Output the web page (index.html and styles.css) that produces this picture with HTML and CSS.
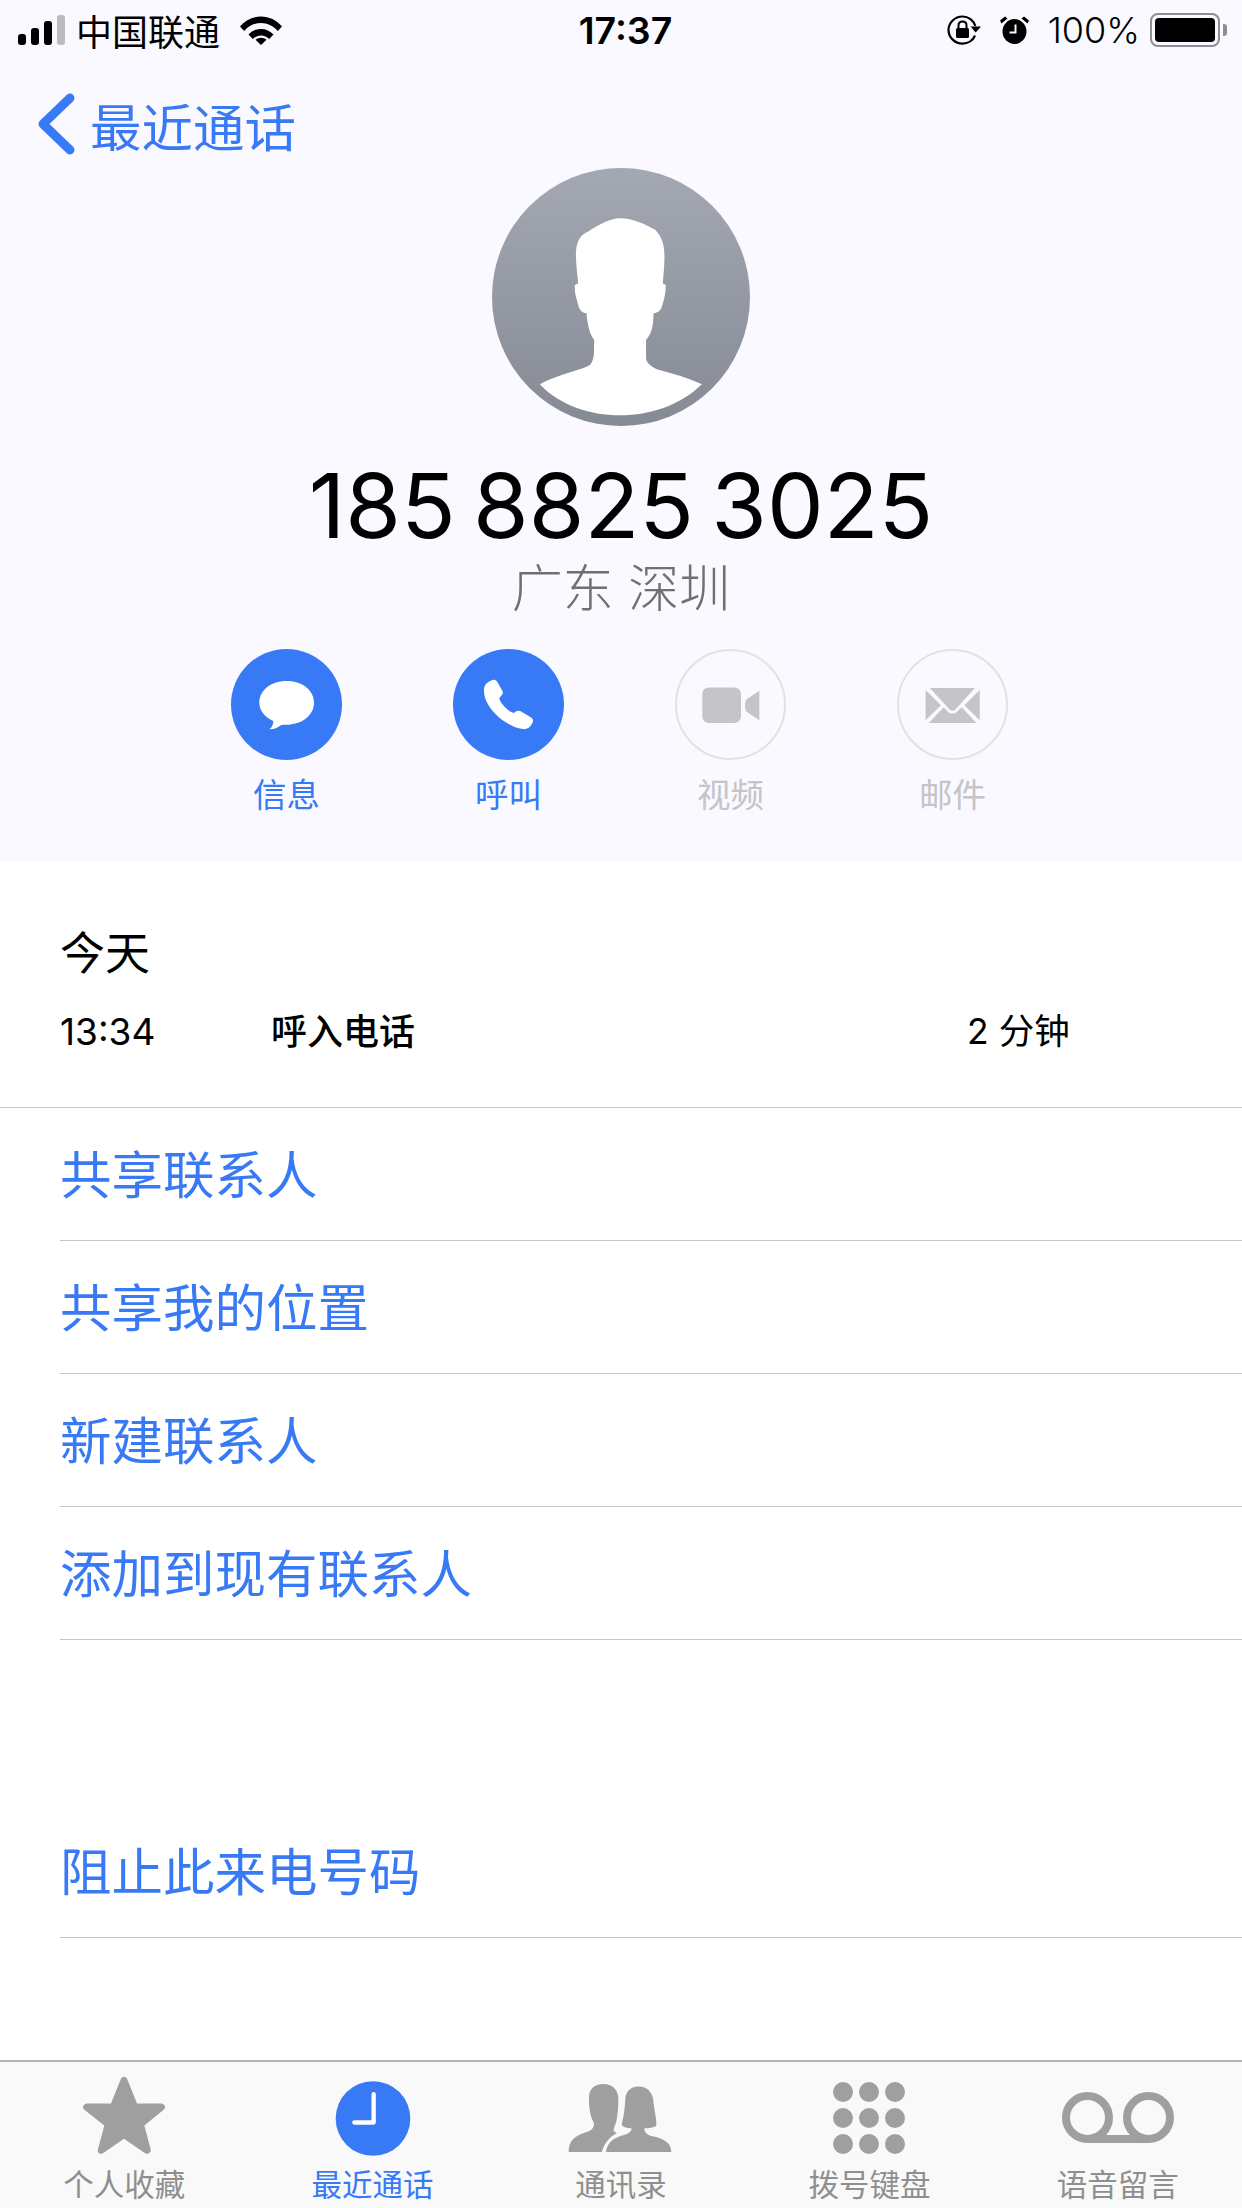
FILE: index.html
```html
<!DOCTYPE html>
<html lang="zh-CN">
<head>
    <meta charset="UTF-8">
    <meta name="viewport" content="width=device-width, initial-scale=1.0">
    <title>最近通话</title>
    <link rel="stylesheet" href="styles.css">
</head>
<body>
    <header class="top">
        <div class="status">
            <div class="status-side">
                <svg class="signal" viewBox="0 0 47 30">
                    <rect x="0" y="19" width="8" height="11" rx="3" fill="#000"/>
                    <rect x="13" y="13" width="8" height="17" rx="3" fill="#000"/>
                    <rect x="26" y="6" width="8" height="24" rx="3" fill="#000"/>
                    <rect x="39" y="0" width="8" height="30" rx="3" fill="#bcbcc0"/>
                </svg>
                <span class="carrier">中国联通</span>
                <svg class="wifi" viewBox="0 0 42 30">
                    <path d="M0 11.500C5.500 5 13 1.500 21 1.500S36.500 5 42 11.500L37.800 16C33.500 11 27.500 8 21 8S8.500 11 4.200 16Z" fill="#000"/>
                    <path d="M8.500 19.500C11.800 16 16.200 14 21 14s9.200 2 12.500 5.500L29.200 24C27 21.800 24.200 20.500 21 20.500S15 21.800 12.800 24Z" fill="#000"/>
                    <path d="M15.500 24.800C17 23.500 19 22.800 21 22.800s4 .7 5.500 2L21 30Z" fill="#000"/>
                </svg>
            </div>
            <span class="clock">17:37</span>
            <div class="status-side status-right">
                <svg class="rotate-lock" viewBox="0 0 34 30">
                    <path d="M28 20.500C26 25.500 21 28.600 15.500 28.600 8 28.600 1.500 22.500 1.500 15S8 1.500 15.500 1.500C21.500 1.500 26.500 5.500 28.300 11" fill="none" stroke="#000" stroke-width="2.200"/>
                    <path d="M23.500 11.500H34L28.700 17.500Z" fill="#000"/>
                    <rect x="9" y="13" width="13" height="10" rx="1.500" fill="#000"/>
                    <path d="M11.500 13.500V10.500C11.500 8 13.200 6.500 15.500 6.500S19.500 8 19.500 10.500V13.500" fill="none" stroke="#000" stroke-width="2"/>
                </svg>
                <svg class="alarm" viewBox="0 0 29 28">
                    <ellipse cx="14.500" cy="15.500" rx="12" ry="12.500" fill="#000"/>
                    <path d="M0 4.500 5 .5 7.500 2.500 1.500 7.500ZM29 4.500 24 .5 21.500 2.500 27.500 7.500Z" fill="#000"/>
                    <path d="M15.500 8.500V16.500H9.500" fill="none" stroke="#f9f9ff" stroke-width="2"/>
                </svg>
                <span class="percent">100%</span>
                <div class="battery"><div class="battery-fill"></div></div>
                <div class="battery-cap"></div>
            </div>
        </div>

        <div class="nav">
            <svg class="chevron" viewBox="0 0 37 62">
                <path d="M32 5 5 31 32 57" fill="none" stroke="#387af6" stroke-width="9" stroke-linecap="round" stroke-linejoin="round"/>
            </svg>
            <span class="nav-title">最近通话</span>
        </div>

        <svg class="avatar" viewBox="97 55 772 772">
            <defs>
                <linearGradient id="avatarFill" x1="0" y1="0" x2="0" y2="1">
                    <stop offset="0" stop-color="#a4a8b3"/>
                    <stop offset="1" stop-color="#868a94"/>
                </linearGradient>
            </defs>
            <circle cx="483" cy="441" r="386" fill="url(#avatarFill)"/>
            <path d="M480 205C520 205 560 225 585 240C605 260 613 285 613 320C613 350 610 375 608 400L617 405C617 430 612 450 605 470C600 485 590 488 580 490C580 520 578 545 558 570L558 625C560 640 575 650 590 657C640 670 690 685 725 702C660 765 570 795 480 795C390 795 300 765 240 702C280 680 340 665 380 650C395 645 400 630 402 610L403 570C388 550 382 520 380 490C370 488 360 485 355 465C350 445 343 430 345 405L355 400C352 370 348 340 348 310C350 275 360 255 385 245C415 225 450 205 480 205Z" fill="#fff"/>
        </svg>

        <div class="number">185 8825 3025</div>
        <div class="location">广东 深圳</div>

        <div class="actions">
            <div class="action">
                <div class="action-icon">
                    <svg viewBox="63 57 333 333">
                        <path d="M230 153C280 153 312 183 312 218C312 256 275 284 228 284C222 284 218 284 214 285C205 292 192 299 178 298C186 292 190 284 190 273C165 262 148 242 148 218C148 183 180 153 230 153Z" fill="#fff"/>
                    </svg>
                </div>
                <span class="action-label">信息</span>
            </div>
            <div class="action">
                <div class="action-icon">
                    <svg viewBox="729 57 333 333">
                        <path d="M846 151C852 148 858 150 862 156L877 182C880 188 878 194 873 198L868 204C868 212 880 228 890 236C898 243 905 248 912 249C918 243 925 240 932 244L962 262C970 267 971 273 966 281C960 293 950 299 938 297C905 292 872 270 850 245C830 222 818 195 823 172C825 163 835 155 846 151Z" fill="#fff"/>
                    </svg>
                </div>
                <span class="action-label">呼叫</span>
            </div>
            <div class="action action-off">
                <div class="action-icon">
                    <svg viewBox="109 59 326 326">
                        <rect x="186" y="170" width="118" height="108" rx="20" fill="#c4c4c9"/>
                        <path d="M360 180V270L322 245C314 238 314 212 322 205Z" fill="#c4c4c9"/>
                    </svg>
                </div>
                <span class="action-label">视频</span>
            </div>
            <div class="action action-off">
                <div class="action-icon">
                    <svg viewBox="774 59 326 326">
                        <path d="M868 172H1005L948 235C942 243 932 243 926 235Z" fill="#c4c4c9"/>
                        <path d="M855 178V270L902 224ZM1020 178V270L973 224Z" fill="#c4c4c9"/>
                        <path d="M865 278 910 230 922 243C932 252 942 252 952 243L965 230 1010 278Z" fill="#c4c4c9"/>
                    </svg>
                </div>
                <span class="action-label">邮件</span>
            </div>
        </div>
    </header>

    <section class="calls">
        <div class="calls-day">今天</div>
        <div class="calls-row">
            <span class="calls-time">13:34</span>
            <span class="calls-type">呼入电话</span>
            <span class="calls-length">2 分钟</span>
        </div>
    </section>

    <ul class="links">
        <li class="link">共享联系人</li>
        <li class="link">共享我的位置</li>
        <li class="link">新建联系人</li>
        <li class="link">添加到现有联系人</li>
    </ul>

    <ul class="links links-block">
        <li class="link">阻止此来电号码</li>
    </ul>

    <nav class="tabs">
        <div class="tab">
            <svg viewBox="221 100 300 245">
                <path d="M371 108C376 108 380 112 382 118L410 188H482C494 188 498 200 490 207L432 254L451 325C453 336 442 343 432 336L371 294L310 336C300 343 289 336 293 325L312 254L252 207C244 200 250 188 260 188H332L360 118C362 112 366 108 371 108Z" fill="#9f9f9f"/>
            </svg>
            <span class="tab-label">个人收藏</span>
        </div>
        <div class="tab tab-on">
            <svg viewBox="969 100 300 245">
                <circle cx="1119" cy="233" r="112" fill="#387af6"/>
                <path d="M1121 160V245H1063" fill="none" stroke="#fff" stroke-width="13" stroke-linecap="round" stroke-linejoin="round"/>
            </svg>
            <span class="tab-label">最近通话</span>
        </div>
        <div class="tab">
            <svg viewBox="150 100 211.300 245" preserveAspectRatio="none">
                <path d="M218 130C240 130 250 150 250 175C250 205 248 225 246 240C244 252 240 262 240 270L247 277C235 285 222 300 215 333L145 333C145 305 155 285 180 275C195 268 200 260 198 245C190 225 188 200 188 170C188 145 200 130 218 130Z" fill="#9f9f9f"/>
                <path d="M292 137C312 137 322 155 324 180C326 210 332 240 330 255C320 262 310 262 305 262C305 275 310 282 325 287C350 295 362 310 362 333L224 333C226 305 240 290 262 282C272 278 278 272 278 262C268 262 258 258 257 250C262 225 264 200 265 170C267 150 278 137 292 137Z" fill="#9f9f9f"/>
            </svg>
            <span class="tab-label">通讯录</span>
        </div>
        <div class="tab">
            <svg viewBox="0 0 100 82">
                <circle cx="24" cy="18" r="10" fill="#9f9f9f"/>
                <circle cx="50" cy="18" r="10" fill="#9f9f9f"/>
                <circle cx="76" cy="18" r="10" fill="#9f9f9f"/>
                <circle cx="24" cy="44" r="10" fill="#9f9f9f"/>
                <circle cx="50" cy="44" r="10" fill="#9f9f9f"/>
                <circle cx="76" cy="44" r="10" fill="#9f9f9f"/>
                <circle cx="24" cy="70" r="10" fill="#9f9f9f"/>
                <circle cx="50" cy="70" r="10" fill="#9f9f9f"/>
                <circle cx="76" cy="70" r="10" fill="#9f9f9f"/>
            </svg>
            <span class="tab-label">拨号键盘</span>
        </div>
        <div class="tab">
            <svg viewBox="0 0 100 82">
                <path d="M19.500 65H80.500" fill="none" stroke="#9f9f9f" stroke-width="8"/>
                <circle cx="19.500" cy="43.500" r="21.500" fill="none" stroke="#9f9f9f" stroke-width="8"/>
                <circle cx="80.500" cy="43.500" r="21.500" fill="none" stroke="#9f9f9f" stroke-width="8"/>
            </svg>
            <span class="tab-label">语音留言</span>
        </div>
    </nav>
</body>
</html>
```

FILE: styles.css
```css
* {
    box-sizing: border-box;
}
body {
    margin: 0;
    width: 1242px;
    height: 2208px;
    display: flex;
    flex-direction: column;
    background: white;
    color: black;
    font-family: Inter, "Noto Sans CJK SC", sans-serif;
    overflow: hidden;
}
ul {
    list-style: none;
    margin: 0;
    padding: 0;
}

.top {
    height: 861px;
    background: #f9f9ff;
    display: flex;
    flex-direction: column;
    align-items: center;
}

.status {
    width: 100%;
    height: 60px;
    padding: 0 15px 0 18px;
    display: flex;
    align-items: center;
    justify-content: space-between;
}
.status-side {
    width: 500px;
    display: flex;
    align-items: center;
}
.status-right {
    justify-content: flex-end;
}
.signal {
    width: 47px;
    height: 30px;
}
.carrier {
    margin-left: 11px;
    font-size: 36px;
}
.wifi {
    width: 42px;
    height: 30px;
    margin-left: 20px;
}
.clock {
    padding-left: 6px;
    font-size: 37.500px;
    font-weight: 600;
}
.rotate-lock {
    width: 34px;
    height: 30px;
}
.alarm {
    width: 29px;
    height: 28px;
    margin-left: 19px;
}
.percent {
    margin-left: 19px;
    font-size: 36px;
    font-weight: 300;
}
.battery {
    width: 70px;
    height: 34px;
    margin-left: 10px;
    padding: 3px;
    border: 2px solid #8f8f93;
    border-radius: 8px;
}
.battery-fill {
    height: 100%;
    background: black;
    border-radius: 4px;
}
.battery-cap {
    width: 4px;
    height: 12px;
    margin-left: 3px;
    background: #8f8f93;
    border-radius: 0 3px 3px 0;
}

.nav {
    width: 100%;
    height: 95px;
    padding: 33px 0 0 38px;
    display: flex;
    align-items: center;
    gap: 15px;
    color: #387af6;
}
.chevron {
    width: 37px;
    height: 62px;
    flex: none;
}
.nav-title {
    font-size: 51.500px;
}

.avatar {
    width: 258px;
    height: 258px;
    margin-top: 13px;
    flex: none;
}
.number {
    margin-top: 22px;
    font-size: 90px;
    line-height: 116px;
    font-weight: 380;
    word-spacing: -8px;
}
.location {
    margin-top: -7px;
    font-size: 51px;
    line-height: 64px;
    font-weight: 300;
    color: #6f6f74;
}

.actions {
    margin-top: 28px;
    margin-right: 3px;
    display: grid;
    grid-template-columns: repeat(4, 222px);
}
.action {
    display: flex;
    flex-direction: column;
    align-items: center;
    color: #387af6;
}
.action-icon {
    width: 111px;
    height: 111px;
    border-radius: 50%;
    background: #387af6;
}
.action-icon svg {
    display: block;
    width: 111px;
    height: 111px;
}
.action-label {
    margin-top: 11px;
    font-size: 33.500px;
    line-height: 48px;
}
.action-off {
    color: #c4c4c9;
}
.action-off .action-icon {
    background: none;
    border: 2px solid #e2e2e6;
}
.action-off .action-icon svg {
    width: 107px;
    height: 107px;
}

.calls {
    height: 247px;
    padding: 61px 0 0 60px;
    border-bottom: 1px solid #c6c6ca;
}
.calls-day {
    font-size: 45px;
    line-height: 64px;
}
.calls-row {
    margin-top: 21px;
    display: grid;
    grid-template-columns: 211px 696px auto;
    font-size: 36px;
    line-height: 50px;
}
.calls-time {
    font-size: 37px;
}
.calls-type {
    font-weight: 500;
}
.calls-length {
    font-size: 35.500px;
}

.links {
    padding-left: 60px;
    color: #387af6;
}
.links-block {
    margin-top: 165px;
}
.link {
    height: 133px;
    padding-bottom: 5px;
    display: flex;
    align-items: center;
    font-size: 51.500px;
    border-bottom: 1px solid #c6c6ca;
}

.tabs {
    margin-top: auto;
    height: 148px;
    padding-top: 12px;
    display: grid;
    grid-template-columns: repeat(5, 1fr);
    background: #f9f9f9;
    border-top: 2px solid #b4b4b4;
}
.tab {
    display: flex;
    flex-direction: column;
    align-items: center;
    color: #8f8f8f;
}
.tab svg {
    width: 100px;
    height: 82px;
    overflow: visible;
}
.tab-label {
    margin-top: 9px;
    font-size: 30.500px;
    line-height: 40px;
}
.tab-on {
    color: #387af6;
}
```
